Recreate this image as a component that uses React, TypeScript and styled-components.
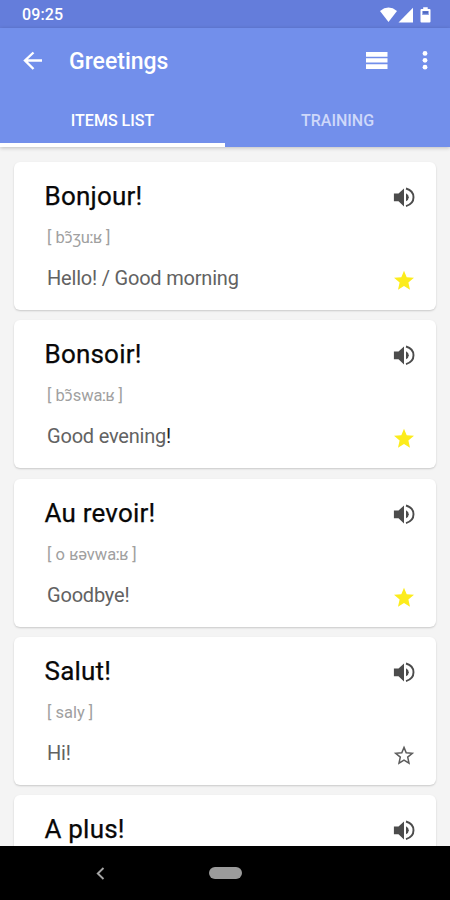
import React, { Fragment } from 'react';
import styled, { createGlobalStyle } from 'styled-components';

const GlobalStyle = createGlobalStyle`
  *, *::before, *::after { box-sizing: border-box; }
  body { margin: 0; background: #f4f4f4; font-family: Roboto, "Noto Sans", sans-serif; }
`;

const Screen = styled.div`
  display: flex;
  flex-direction: column;
  width: 450px;
  height: 900px;
  overflow: hidden;
  background: #f4f4f4;
`;

const StatusBar = styled.div`
  display: flex;
  flex: none;
  align-items: center;
  justify-content: space-between;
  height: 28px;
  padding: 1px 19px 0 22px;
  background: #647ddb;
  color: #fff;
`;

const Clock = styled.span`
  font: 500 16px/28px Roboto, sans-serif;
  letter-spacing: 0.1px;
`;

const Header = styled.header`
  flex: none;
  height: 119px;
  background: #728feb;
  color: #fff;
  box-shadow: 0 1px 4px rgba(0, 0, 0, 0.22);
`;

const Toolbar = styled.div`
  display: flex;
  align-items: center;
  height: 66px;
  padding: 0 22px 0 22px;
`;

const Heading = styled.h1`
  flex: 1;
  margin: 1px 0 0 26px;
  font: 500 23px/32px Roboto, sans-serif;
`;

const IconButton = styled.button<{ $gap?: number }>`
  display: flex;
  margin: 0 0 0 ${(p) => p.$gap ?? 0}px;
  padding: 0;
  border: 0;
  background: none;
  color: inherit;
`;

const Tabs = styled.nav`
  display: grid;
  grid-template-columns: 1fr 1fr;
  height: 53px;
`;

const Tab = styled.div<{ $active?: boolean }>`
  height: 53px;
  padding-top: 2px;
  border-bottom: 4px solid ${(p) => (p.$active ? '#fff' : 'transparent')};
  color: ${(p) => (p.$active ? '#fff' : '#ced8fa')};
  font: 500 16px/49px Roboto, sans-serif;
  text-align: center;
`;

const List = styled.main`
  display: flex;
  flex: 1;
  flex-direction: column;
  gap: 10.3px;
  min-height: 0;
  padding: 15px 14px 0;
  overflow: hidden;
`;

const Card = styled.article`
  display: flex;
  flex: none;
  justify-content: space-between;
  height: 148px;
  padding: 18px 21px 18px 30px;
  border-radius: 6px;
  background: #fff;
  box-shadow: 0 1px 2px rgba(0, 0, 0, 0.18);
`;

const Phrase = styled.h2`
  margin: 0 0 0 0.5px;
  color: #080808;
  font: 400 26px/32px Roboto, sans-serif;
  letter-spacing: 0.2px;
  -webkit-text-stroke: 0.25px #080808;
`;

const Sound = styled.p`
  margin: 14px 0 0 3px;
  color: #a0a0a0;
  font: 400 16.5px/24px Roboto, "Noto Sans", sans-serif;
`;

const LengthMark = styled.span`
  margin: 0 -1.3px;
`;

const Meaning = styled.p`
  margin: 15px 0 0 3px;
  color: #626262;
  font: 400 20px/26px Roboto, sans-serif;
  letter-spacing: -0.2px;
`;

const Mark = styled.span`
  color: #222;
`;

const Actions = styled.div`
  display: flex;
  flex-direction: column;
  justify-content: space-between;
  padding: 6px 0 1px;
  color: #4c4c4c;
`;

const NavBar = styled.footer`
  display: flex;
  flex: none;
  align-items: center;
  height: 54px;
  padding-left: 96px;
  background: #000;
`;

const HomePill = styled.div`
  width: 33px;
  height: 12px;
  margin-left: 104px;
  border-radius: 6px;
  background: #9b9b9b;
`;

const StatusIcons = () => (
  <svg width="51" height="16" viewBox="0 0 51 16" fill="#fff">
    <path d="M0 4Q8.5-2.8 17 4L8.5 15Z" />
    <path d="M18.5 15.5 33 .8V15.5Z" />
    <path fillRule="evenodd" d="M43.2.2h4.5V2h1.8q1 0 1 1v11.5q0 1-1 1h-8q-1 0-1-1V3q0-1 1-1h1.7ZM42.5 4v4h6V4Z" />
    <path d="M42.5 4h6v4h-6Z" fill="#8da1e6" />
    <path d="M43 4.2h5v2.5h-5Z" fill="#4e68c1" />
  </svg>
);

const BackArrow = () => (
  <svg width="21" height="20" viewBox="0 0 21 20" fill="none" stroke="#fff" strokeWidth="2.4">
    <path d="M20 9.5H3M11.5 1.5 3 9.5l8.5 8.5" />
  </svg>
);

const ListIcon = () => (
  <svg width="22" height="18" viewBox="0 0 22 18" fill="#fff">
    <path d="M0 0h21.5v4.8H0ZM0 6.3h21.5v4.3H0ZM0 12.2h21.5v4.8H0Z" />
  </svg>
);

const MoreIcon = () => (
  <svg width="6" height="20" viewBox="0 0 6 20" fill="#fff">
    <circle cx="3" cy="2.4" r="2.4" />
    <circle cx="3" cy="9.3" r="2.4" />
    <circle cx="3" cy="16.2" r="2.4" />
  </svg>
);

const Speaker = () => (
  <svg width="22" height="22" viewBox="0 0 22 22" fill="currentColor">
    <path d="M.9 7.5h4.6L11 2.5v18l-5.5-5.2H.9Z" />
    <path d="M13 7.3q2.8 1.4 2.8 4t-2.8 4Z" />
    <path d="M13 2.5q7.5 2.1 7.5 8.8T13 20.1" fill="none" stroke="currentColor" strokeWidth="1.9" />
  </svg>
);

const Star = ({ filled }: { filled: boolean }) => (
  <svg width="22" height="21" viewBox="0 0 22 21">
    <path
      d={
        filled
          ? 'M11 .8 13.7 7.2 21 7.8 15.4 12.4 17 19.7 11 15.9 5 19.7 6.6 12.4 1 7.8 8.3 7.2Z'
          : 'M11 2.4 13.2 7.8 19.3 8.3 14.7 12.1 16 18.2 11 15.1 6 18.2 7.3 12.1 2.7 8.3 8.8 7.8Z'
      }
      fill={filled ? '#fcec1c' : 'none'}
      stroke={filled ? 'none' : '#5c5c5c'}
      strokeWidth="1.5"
    />
  </svg>
);

const Chevron = () => (
  <svg width="9" height="13" viewBox="0 0 9 13" fill="none" stroke="#a5a5a5" strokeWidth="1.9">
    <path d="M7.5 1 1.8 6.5 7.5 12" />
  </svg>
);

const Pronunciation = ({ text }: { text: string }) => (
  <Sound>
    {text.split('ː').map((part, i) => (
      <Fragment key={i}>
        {i > 0 && <LengthMark>ː</LengthMark>}
        {part}
      </Fragment>
    ))}
  </Sound>
);

type Item = { phrase: string; sound?: string; meaning?: string; mark?: string; starred?: boolean };

const items: Item[] = [
  { phrase: 'Bonjour!', sound: '[ bɔ̃ʒuːʁ ]', meaning: 'Hello! / Good morning', starred: true },
  { phrase: 'Bonsoir!', sound: '[ bɔ̃swaːʁ ]', meaning: 'Good evening', mark: '!', starred: true },
  { phrase: 'Au revoir!', sound: '[ o ʁəvwaːʁ ]', meaning: 'Goodbye!', starred: true },
  { phrase: 'Salut!', sound: '[ saly ]', meaning: 'Hi!', starred: false },
  { phrase: 'A plus!' },
];

export default function App() {
  return (
    <>
      <GlobalStyle />
      <Screen>
        <StatusBar>
          <Clock>09:25</Clock>
          <StatusIcons />
        </StatusBar>
        <Header>
          <Toolbar>
            <IconButton aria-label="Back"><BackArrow /></IconButton>
            <Heading>Greetings</Heading>
            <IconButton aria-label="View"><ListIcon /></IconButton>
            <IconButton aria-label="More" $gap={34}><MoreIcon /></IconButton>
          </Toolbar>
          <Tabs>
            <Tab $active>ITEMS LIST</Tab>
            <Tab>TRAINING</Tab>
          </Tabs>
        </Header>
        <List>
          {items.map((item) => (
            <Card key={item.phrase}>
              <div>
                <Phrase>{item.phrase}</Phrase>
                {item.sound && <Pronunciation text={item.sound} />}
                {item.meaning && (
                  <Meaning>
                    {item.meaning}
                    {item.mark && <Mark>{item.mark}</Mark>}
                  </Meaning>
                )}
              </div>
              <Actions>
                <IconButton aria-label="Listen"><Speaker /></IconButton>
                {item.starred !== undefined && (
                  <IconButton aria-label="Favourite"><Star filled={item.starred} /></IconButton>
                )}
              </Actions>
            </Card>
          ))}
        </List>
        <NavBar>
          <Chevron />
          <HomePill />
        </NavBar>
      </Screen>
    </>
  );
}
